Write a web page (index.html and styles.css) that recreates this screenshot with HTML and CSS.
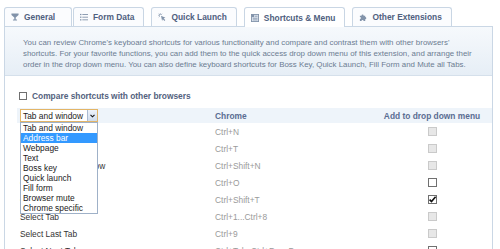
FILE: index.html
```html
<!DOCTYPE html>
<html>
<head>
<meta charset="utf-8">
<title>Shortcuts &amp; Menu</title>
<link rel="stylesheet" href="styles.css">
</head>
<body>
<div class="tabs">
  <div class="tab tab-first">
    <svg class="ico" viewBox="0 0 9 9"><path d="M0.5 0.5h8v1.8L5.3 5v2.2h1.5v1.3H2.2V7.2h1.5V5L0.5 2.3z" fill="#8293aa"/></svg>
    <span>General</span>
  </div>
  <div class="tab">
    <svg class="ico" viewBox="0 0 9 9"><g fill="#8293aa"><rect x="0" y="1" width="1.6" height="1.4"/><rect x="0" y="4" width="1.6" height="1.4"/><rect x="0" y="7" width="1.6" height="1.4"/><rect x="2.6" y="1.2" width="6.4" height="1"/><rect x="2.6" y="4.2" width="6.4" height="1"/><rect x="2.6" y="7.2" width="6.4" height="1"/></g></svg>
    <span>Form Data</span>
  </div>
  <div class="tab">
    <svg class="ico" viewBox="0 0 9 9"><path d="M3.4 3.2L8.4 5.4 6.3 6.1 8.2 8 7.3 8.9 5.4 7 4.6 9z" fill="#8293aa"/><g stroke="#8293aa" stroke-width="0.9"><path d="M2.6 0.3v1.8M0.3 2.6h1.8M0.9 0.9l1.1 1.1M4.6 0.9L3.6 2M0.9 4.6L2 3.6"/></g></svg>
    <span>Quick Launch</span>
  </div>
  <div class="tab active">
    <svg class="ico" viewBox="0 0 9 9"><rect x="0.5" y="0.5" width="8" height="8" fill="#dfe6ef" stroke="#8293aa"/><rect x="0.5" y="0.5" width="3" height="3" fill="#8293aa"/><g fill="#8293aa"><rect x="4.3" y="2" width="3" height="0.9"/><rect x="2" y="4.3" width="5.3" height="0.9"/><rect x="2" y="6.2" width="5.3" height="0.9"/></g></svg>
    <span>Shortcuts &amp; Menu</span>
  </div>
  <div class="tab">
    <svg class="ico" viewBox="0 0 9 9"><path d="M1 3h1.8a1.2 1.2 0 1 1 2.4 0H7v1.6a1.2 1.2 0 1 1 0 2.4V9H5.2a1.2 1.2 0 1 0-2.4 0H1V6.8a1.2 1.2 0 1 0 0-2.4z" fill="#8293aa"/></svg>
    <span>Other Extensions</span>
  </div>
</div>

<div class="panel">
  <div class="desc">You can review Chrome's keyboard shortcuts for various functionality and compare and contrast them with other browsers'<br>shortcuts. For your favorite functions, you can add them to the quick access drop down menu of this extension, and arrange their<br>order in the drop down menu. You can also define keyboard shortcuts for Boss Key, Quick Launch, Fill Form and Mute all Tabs.</div>

  <div class="options">
    <label class="compare"><span class="cb"></span><span>Compare shortcuts with other browsers</span></label>

    <div class="grid">
      <div class="row head">
        <div class="c1">
          <div class="select">
            <span class="select-text">Tab and window</span>
            <span class="select-btn"><svg viewBox="0 0 6 4" class="chev"><path d="M0.6 0.6L3 3 5.4 0.6" fill="none" stroke="#111" stroke-width="1.3"/></svg></span>
            <ul class="dropdown">
              <li>Tab and window</li>
              <li class="hl">Address bar</li>
              <li>Webpage</li>
              <li>Text</li>
              <li>Boss key</li>
              <li>Quick launch</li>
              <li>Fill form</li>
              <li>Browser mute</li>
              <li>Chrome specific</li>
            </ul>
          </div>
        </div>
        <div class="c2 th">Chrome</div>
        <div class="c3 th">Add to drop down menu</div>
      </div>

      <div class="row"><div class="c1">New Window</div><div class="c2 key">Ctrl+N</div><div class="c3"><span class="cb dis"></span></div></div>
      <div class="row"><div class="c1">New Tab</div><div class="c2 key">Ctrl+T</div><div class="c3"><span class="cb dis"></span></div></div>
      <div class="row"><div class="c1">New Incognito Window</div><div class="c2 key">Ctrl+Shift+N</div><div class="c3"><span class="cb dis"></span></div></div>
      <div class="row"><div class="c1">Open File</div><div class="c2 key">Ctrl+O</div><div class="c3"><span class="cb on"></span></div></div>
      <div class="row"><div class="c1">Open Closed Tab</div><div class="c2 key">Ctrl+Shift+T</div><div class="c3"><span class="cb on"><svg viewBox="0 0 9 9" class="tick"><path d="M1.6 4.6L3.5 6.6 7.6 1.8" fill="none" stroke="#111" stroke-width="1.6"/></svg></span></div></div>
      <div class="row"><div class="c1">Select Tab</div><div class="c2 key">Ctrl+1...Ctrl+8</div><div class="c3"><span class="cb dis"></span></div></div>
      <div class="row"><div class="c1">Select Last Tab</div><div class="c2 key">Ctrl+9</div><div class="c3"><span class="cb dis"></span></div></div>
      <div class="row"><div class="c1">Select Next Tab</div><div class="c2 key">Ctrl+Tab, Ctrl+PageDown</div><div class="c3"><span class="cb on"></span></div></div>
    </div>
  </div>
</div>
</body>
</html>
```

FILE: styles.css
```css
html, body {
  margin: 0;
  padding: 0;
  background: #ffffff;
  font-family: "Liberation Sans", Arial, sans-serif;
  overflow: hidden;
  height: 249px;
}

.tabs {
  display: flex;
  align-items: flex-start;
  height: 19px;
  padding: 7px 0 0 4px;
}

.tab {
  box-sizing: border-box;
  position: relative;
  z-index: 1;
  height: 19px;
  min-width: 68px;
  display: flex;
  align-items: center;
  gap: 5px;
  padding: 0 9px 0 6px;
  margin-left: 7px;
  border: 1px solid #c9d6e4;
  border-bottom: none;
  border-radius: 3px 3px 0 0;
  background: #fbfcfe;
  font-size: 8.4px;
  font-weight: bold;
  color: #4f607e;
  white-space: nowrap;
}

.tab-first {
  margin-left: 0;
  margin-right: -6px;
}

.tab.active {
  height: 20px;
  background: #ffffff;
}

.ico {
  width: 8px;
  height: 8px;
  flex: none;
}

.panel {
  box-sizing: border-box;
  margin: 0 7px 0 4px;
  border: 1px solid #cad7e5;
  border-bottom: none;
  height: 223px;
  overflow: hidden;
}

.desc {
  padding: 10px 18px 5px;
  background: linear-gradient(#f6f9fc, #e6eef6);
  border-bottom: 1px solid #d5e0eb;
  font-size: 7.9px;
  line-height: 11px;
  color: #6c7c92;
  white-space: nowrap;
}

.options {
  padding: 16px 0 0 12px;
}

.compare {
  display: flex;
  align-items: center;
  gap: 5px;
  margin-left: 2px;
  height: 8px;
  font-size: 8.4px;
  font-weight: bold;
  color: #53627e;
}

.cb {
  box-sizing: border-box;
  display: inline-block;
  width: 8px;
  height: 8px;
  border: 1px solid #6f6f6f;
  background: #ffffff;
  flex: none;
  position: relative;
}

.c3 .cb {
  width: 9px;
  height: 9px;
}

.cb.dis {
  border-color: #cacaca;
  background: #e7e7e7;
}

.cb.on {
  border-color: #707070;
}

.tick {
  position: absolute;
  left: -1px;
  top: -1px;
  width: 9px;
  height: 9px;
}

.grid {
  margin-top: 8px;
}

.row {
  display: grid;
  grid-template-columns: 198px 165px 102px;
  align-items: center;
  height: 17px;
  font-size: 8.4px;
  color: #333333;
  white-space: nowrap;
}

.row.head {
  height: 15px;
  background: #eef4fa;
}

.c1 {
  padding-left: 3px;
}

.c3 {
  display: flex;
  justify-content: center;
  padding-left: 2px;
}

.th {
  font-weight: bold;
  color: #5a6d92;
}

.key {
  color: #9a9a9a;
}

.select {
  position: relative;
  box-sizing: border-box;
  width: 78px;
  height: 13px;
  border: 1px solid #e3b567;
  background: #ffffff;
  display: flex;
  align-items: center;
}

.select-text {
  flex: 1;
  padding-left: 2px;
  font-size: 8.4px;
  color: #222222;
}

.select-btn {
  box-sizing: border-box;
  width: 10px;
  height: 11px;
  border-left: 1px solid #a9bbd2;
  background: linear-gradient(#eef3fa, #cfdcec);
  display: flex;
  align-items: center;
  justify-content: center;
}

.chev {
  width: 5px;
  height: 4px;
}

.dropdown {
  position: absolute;
  z-index: 5;
  left: -1px;
  top: calc(100% + 1px);
  box-sizing: border-box;
  width: 78px;
  margin: 0;
  padding: 0;
  list-style: none;
  background: #ffffff;
  border: 1px solid #9fb1c8;
}

.dropdown li {
  height: 10px;
  line-height: 10px;
  padding-left: 2px;
  font-size: 8.4px;
  color: #222222;
}

.dropdown li.hl {
  background: #3399ff;
  color: #ffffff;
}
```
